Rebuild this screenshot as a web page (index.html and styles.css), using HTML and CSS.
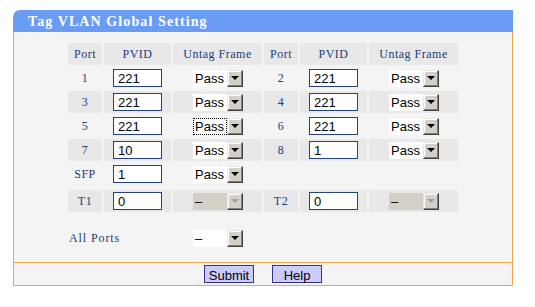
FILE: index.html
```html
<!DOCTYPE html>
<html>
<head>
<meta charset="utf-8">
<link rel="stylesheet" href="styles.css">
</head>
<body>
<div class="panel">
  <div class="title">Tag VLAN Global Setting</div>
  <div class="body">
    <div class="grid">
      <div class="c g lbl">Port</div><div class="c g lbl">PVID</div><div class="c g lbl">Untag Frame</div>
      <div class="c g lbl">Port</div><div class="c g lbl">PVID</div><div class="c g lbl">Untag Frame</div>

      <div class="c lbl">1</div><div class="c"><span class="inp">221</span></div><div class="c"><span class="sel"><span class="val">Pass</span><span class="arr"></span></span></div>
      <div class="c lbl">2</div><div class="c"><span class="inp">221</span></div><div class="c"><span class="sel"><span class="val">Pass</span><span class="arr"></span></span></div>

      <div class="c g lbl">3</div><div class="c g"><span class="inp">221</span></div><div class="c g"><span class="sel"><span class="val">Pass</span><span class="arr"></span></span></div>
      <div class="c g lbl">4</div><div class="c g"><span class="inp">221</span></div><div class="c g"><span class="sel"><span class="val">Pass</span><span class="arr"></span></span></div>

      <div class="c lbl">5</div><div class="c"><span class="inp">221</span></div><div class="c"><span class="sel"><span class="val focus">Pass</span><span class="arr"></span></span></div>
      <div class="c lbl">6</div><div class="c"><span class="inp">221</span></div><div class="c"><span class="sel"><span class="val">Pass</span><span class="arr"></span></span></div>

      <div class="c g lbl">7</div><div class="c g"><span class="inp">10</span></div><div class="c g"><span class="sel"><span class="val">Pass</span><span class="arr"></span></span></div>
      <div class="c g lbl">8</div><div class="c g"><span class="inp">1</span></div><div class="c g"><span class="sel"><span class="val">Pass</span><span class="arr"></span></span></div>

      <div class="c lbl">SFP</div><div class="c"><span class="inp">1</span></div><div class="c"><span class="sel"><span class="val">Pass</span><span class="arr"></span></span></div>
      <div class="c"></div><div class="c"></div><div class="c"></div>
    </div>
    <div class="grid trow">
      <div class="c g lbl">T1</div><div class="c g"><span class="inp">0</span></div><div class="c g"><span class="sel dis"><span class="val">–</span><span class="arr"></span></span></div>
      <div class="c g lbl">T2</div><div class="c g"><span class="inp">0</span></div><div class="c g"><span class="sel dis"><span class="val">–</span><span class="arr"></span></span></div>
    </div>
    <div class="grid allrow">
      <div class="all lbl">All Ports</div>
      <div class="c"><span class="sel"><span class="val">–</span><span class="arr"></span></span></div>
    </div>
  </div>
  <div class="footer">
    <span class="btn">Submit</span>
    <span class="btn">Help</span>
  </div>
</div>
</body>
</html>
```
FILE: styles.css
```css
html, body {
  margin: 0;
  padding: 0;
  background: #ffffff;
}
.panel {
  margin: 10px 0 0 13px;
  width: 500px;
}
.title {
  height: 22px;
  line-height: 23px;
  background: #6b9cf4;
  border-top-left-radius: 7px;
  color: #ffffff;
  font-family: "Liberation Serif", serif;
  font-weight: bold;
  font-size: 14px;
  letter-spacing: 1.1px;
  padding-left: 15px;
  box-sizing: border-box;
}
.body {
  height: 230px;
  box-sizing: border-box;
  background: #f4f4f4;
  border-left: 1px solid #f0a850;
  border-right: 1px solid #f0a850;
  padding: 11px 0 0 54px;
}
.grid {
  display: grid;
  grid-template-columns: 34px 67px 89px 34px 67px 89px;
  grid-auto-rows: 22px;
  column-gap: 2px;
  row-gap: 2px;
}
.trow {
  margin-top: 5px;
}
.allrow {
  margin-top: 15px;
  grid-auto-rows: 22px;
}
.c {
  display: flex;
  align-items: center;
  justify-content: center;
}
.g {
  background: #e8e8e8;
}
.lbl {
  font-family: "Liberation Serif", serif;
  font-size: 12px;
  letter-spacing: 0.5px;
  color: #1d3b78;
}
.all {
  grid-column: 1 / span 2;
  display: flex;
  align-items: center;
  padding-left: 1px;
  letter-spacing: 0.9px;
}
.inp {
  display: block;
  width: 49px;
  height: 18px;
  box-sizing: border-box;
  border: 1px solid #23427e;
  background: #ffffff;
  font-family: "Liberation Sans", Arial, sans-serif;
  font-size: 13px;
  line-height: 17px;
  padding-left: 4px;
  color: #000000;
}
.sel {
  display: flex;
  width: 50px;
  height: 17px;
  margin-left: 1px;
}
.val {
  width: 34px;
  height: 17px;
  box-sizing: border-box;
  background: #ffffff;
  font-family: "Liberation Sans", Arial, sans-serif;
  font-size: 13px;
  line-height: 18px;
  padding-left: 2px;
  color: #000000;
}
.val.focus {
  outline: 1px dotted #000000;
  outline-offset: -1px;
}
.arr {
  position: relative;
  width: 16px;
  height: 17px;
  box-sizing: border-box;
  background: #d4d0c8;
  border-top: 1px solid #e8e6e0;
  border-left: 1px solid #e8e6e0;
  border-right: 1px solid #404040;
  border-bottom: 1px solid #404040;
  box-shadow: inset -1px -1px 0 #808080, inset 1px 1px 0 #ffffff;
}
.arr::after {
  content: "";
  position: absolute;
  left: 3px;
  top: 5px;
  border-left: 4px solid transparent;
  border-right: 4px solid transparent;
  border-top: 4px solid #000000;
}
.dis .val {
  background: #d4d0c8;
}
.dis .arr::after {
  border-top-color: #a0a0a0;
}
.footer {
  height: 24px;
  box-sizing: border-box;
  background: #f4f4f4;
  border: 1px solid #f0a850;
  display: flex;
  justify-content: center;
  align-items: center;
  gap: 18px;
}
.btn {
  display: block;
  width: 50px;
  height: 18px;
  box-sizing: border-box;
  background: #ccccfc;
  border: 1px solid #343490;
  font-family: "Liberation Sans", Arial, sans-serif;
  font-size: 13px;
  line-height: 19px;
  text-align: center;
  color: #000000;
}
```
